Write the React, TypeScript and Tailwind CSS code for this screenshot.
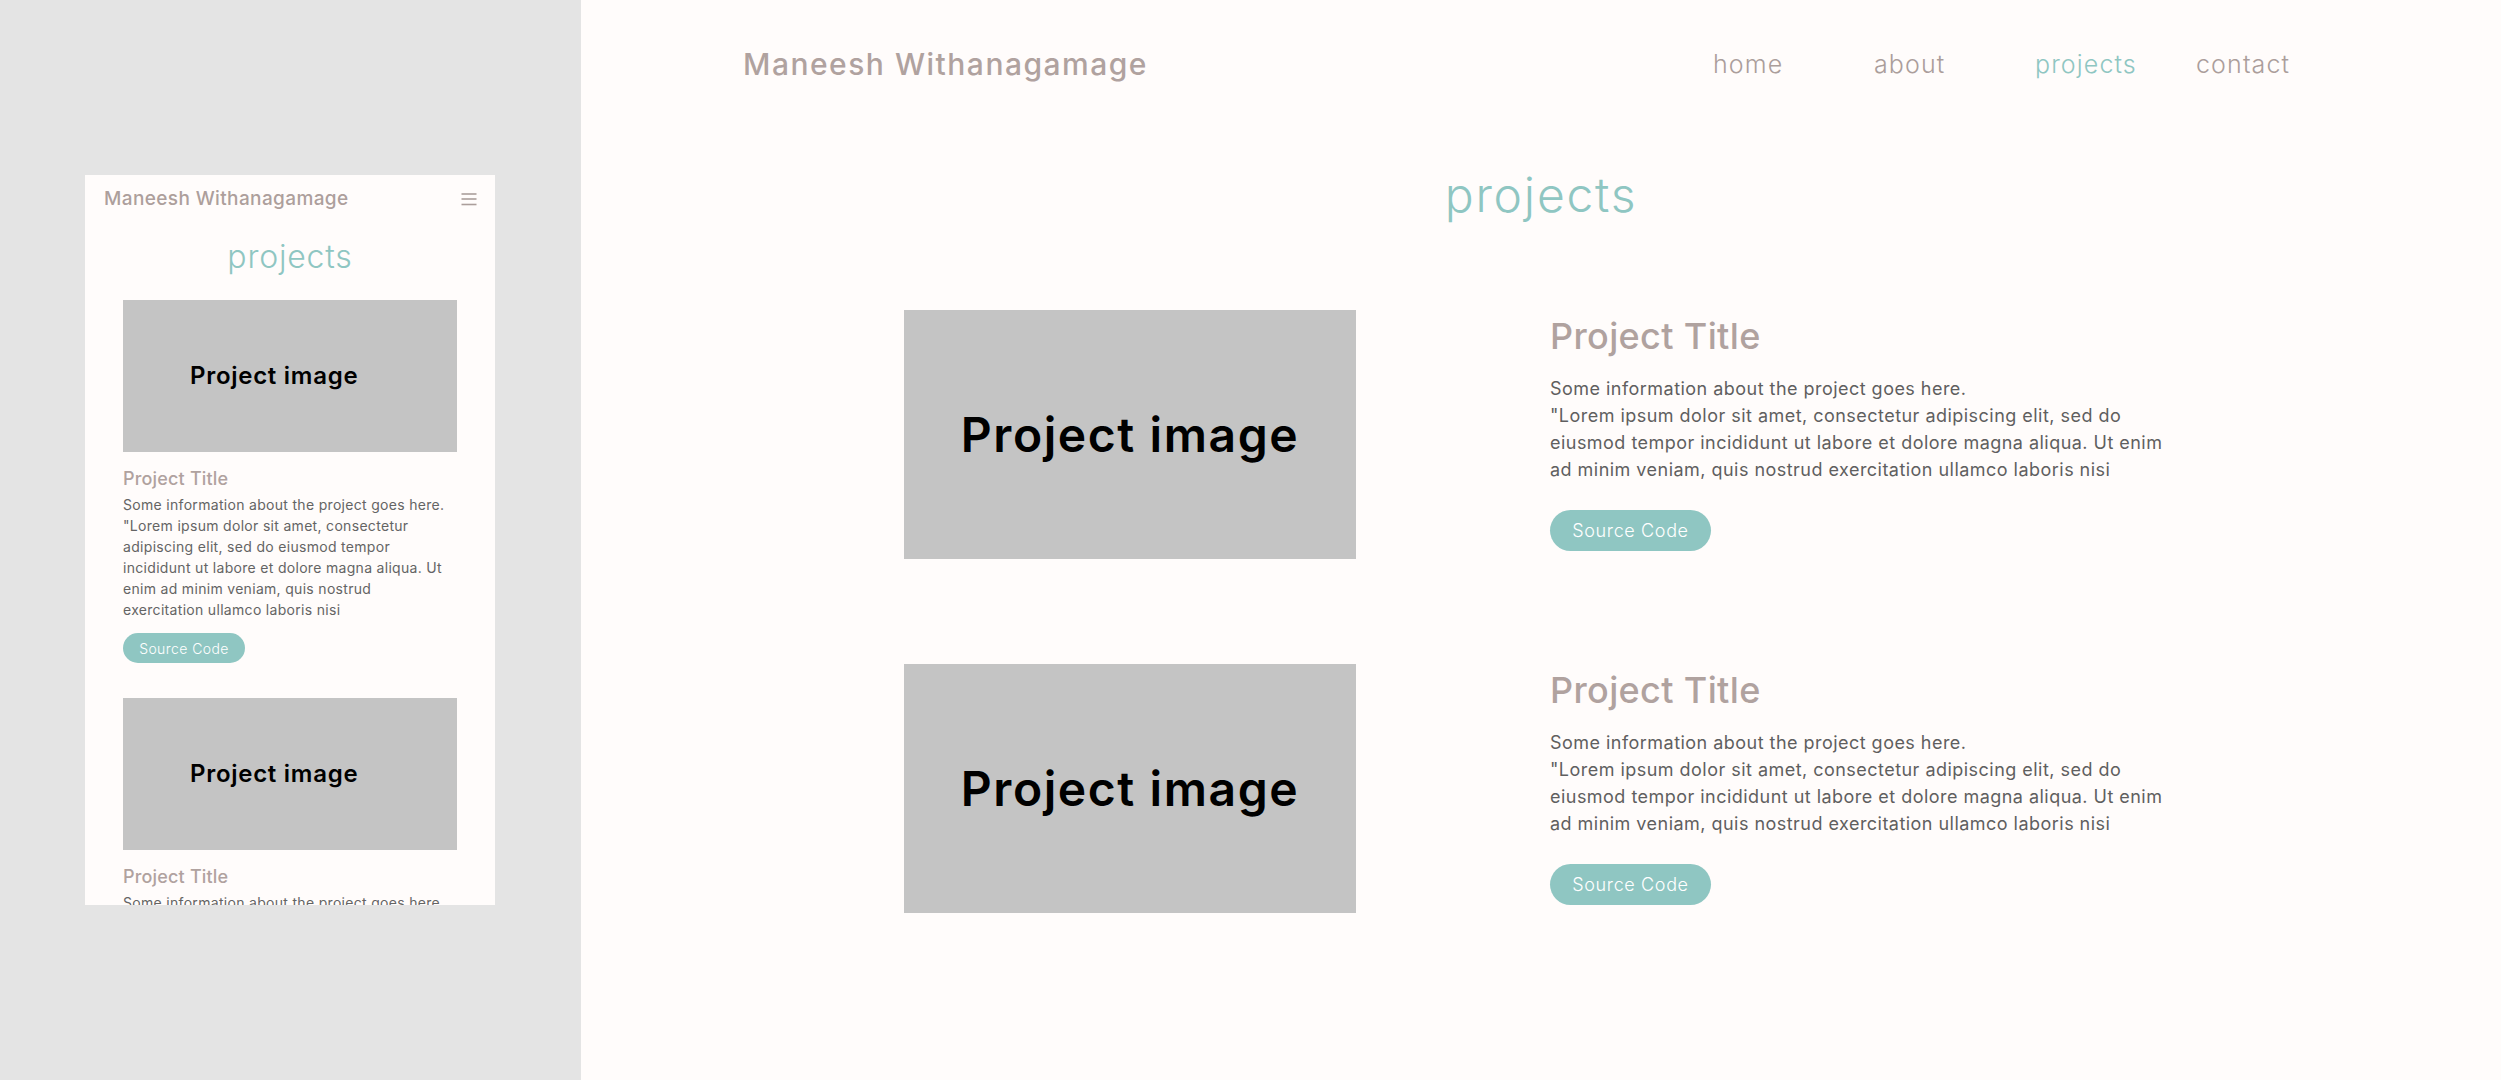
import React from "react";

const font = { fontFamily: "Inter, 'Noto Sans', sans-serif" };

const DESKTOP_LINES = [
  "Some information about the project goes here.",
  "\"Lorem ipsum dolor sit amet, consectetur adipiscing elit, sed do",
  "eiusmod tempor incididunt ut labore et dolore magna aliqua. Ut enim",
  "ad minim veniam, quis nostrud exercitation ullamco laboris nisi",
];

const MOBILE_LINES = [
  "Some information about the project goes here.",
  "\"Lorem ipsum dolor sit amet, consectetur",
  "adipiscing elit, sed do eiusmod tempor",
  "incididunt ut labore et dolore magna aliqua. Ut",
  "enim ad minim veniam, quis nostrud",
  "exercitation ullamco laboris nisi",
];

const NAV = ["home", "about", "projects", "contact"];

function MobileProject() {
  return (
    <div className="flex flex-col">
      <div className="flex h-[152px] w-[334px] items-center bg-[#c4c4c4] pl-[67px]">
        <span className="text-[24px] font-semibold leading-none tracking-[0.03em] text-black">Project image</span>
      </div>
      <h3 className="mt-[13px] text-[18px] font-medium leading-[27px] tracking-[0.01em] text-[#b0a29f]">Project Title</h3>
      <p className="mt-[2px] whitespace-nowrap text-[14px] leading-[21px] tracking-[0.022em] text-[#646464]">
        {MOBILE_LINES.map((l, i) => (
          <span key={i} className="block">
            {l}
          </span>
        ))}
      </p>
      <button className="mt-[13px] h-[30px] w-[122px] rounded-full bg-[#8fc6c2] text-[14px] font-light tracking-[0.03em] text-white">
        Source Code
      </button>
    </div>
  );
}

function MobilePreview() {
  return (
    <div className="h-[730px] w-[410px] overflow-hidden bg-[#fffcfb]">
      <div className="flex items-center justify-between pl-[19px] pr-[18px] pt-[10px]">
        <span className="text-[19px] font-medium leading-[28px] tracking-[0.02em] text-[#ad9f9c]">
          Maneesh Withanagamage
        </span>
        <svg width="16" height="14" viewBox="0 0 16 14" className="text-[#ab9e9b]">
          <line x1="0.5" y1="2" x2="15.5" y2="2" stroke="currentColor" strokeWidth="1.6" />
          <line x1="0.5" y1="7" x2="15.5" y2="7" stroke="currentColor" strokeWidth="1.6" />
          <line x1="0.5" y1="12.5" x2="15.5" y2="12.5" stroke="currentColor" strokeWidth="1.6" />
        </svg>
      </div>
      <h2 className="mt-[24px] text-center text-[32px] font-light leading-[40px] tracking-[0.025em] text-[#8fc6c2]">
        projects
      </h2>
      <div className="mt-[23px] flex flex-col gap-[35px] pl-[38px]">
        <MobileProject />
        <MobileProject />
      </div>
    </div>
  );
}

function ProjectRow() {
  return (
    <div className="flex justify-center gap-[194px]">
      <div className="flex h-[249px] w-[452px] items-center justify-center bg-[#c4c4c4]">
        <span className="text-[48px] font-semibold leading-none tracking-[0.033em] text-black">Project image</span>
      </div>
      <div className="flex w-[628px] flex-col items-start pt-[5px]">
        <h3 className="text-[36px] font-medium leading-[43px] tracking-[0.01em] text-[#b0a29f]">Project Title</h3>
        <p className="mt-[17px] whitespace-nowrap text-[18px] leading-[27px] tracking-[0.026em] text-[#5f5f5f]">
          {DESKTOP_LINES.map((l, i) => (
            <span key={i} className="block">
              {l}
            </span>
          ))}
        </p>
        <button className="mt-[27px] h-[41px] w-[161px] rounded-full bg-[#8fc6c2] text-[18px] font-light tracking-[0.035em] text-white">
          Source Code
        </button>
      </div>
    </div>
  );
}

export default function App() {
  return (
    <div className="flex h-[1080px] w-full" style={font}>
      <aside className="w-[581px] shrink-0 bg-[#e4e4e4] pl-[85px] pt-[175px]">
        <MobilePreview />
      </aside>

      <main className="flex-1 bg-[#fffcfb]">
        <header className="flex h-[128px] items-center pl-[162px]">
          <div className="w-[970px]">
            <span className="text-[30px] font-medium tracking-[0.05em] text-[#b0a29f]">Maneesh Withanagamage</span>
          </div>
          <nav className="flex items-center pt-[2px]">
            {NAV.map((n) => (
              <a
                key={n}
                className={`w-[161px] text-[25px] font-light tracking-[0.045em] last:w-auto ${
                  n === "projects" ? "text-[#8fc6c2]" : "text-[#ab9e9b]"
                }`}
              >
                {n}
              </a>
            ))}
          </nav>
        </header>

        <h1 className="mt-[31px] text-center text-[48px] font-light leading-[72px] tracking-[0.037em] text-[#8fc6c2]">
          projects
        </h1>

        <div className="mt-[79px] flex flex-col gap-[105px]">
          <ProjectRow />
          <ProjectRow />
        </div>
      </main>
    </div>
  );
}
